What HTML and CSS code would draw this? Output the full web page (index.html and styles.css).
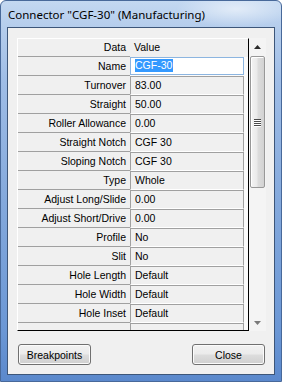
FILE: index.html
```html
<!DOCTYPE html>
<html>
<head>
<meta charset="utf-8">
<link rel="stylesheet" href="styles.css">
</head>
<body>
<div class="window">
  <div class="titlebar"><span class="title">Connector "CGF-30" (Manufacturing)</span></div>
  <div class="client">
    <div class="main">
      <div class="grid">
        <div class="row header"><div class="label">Data</div><div class="wrap"><div class="hcell">Value</div></div></div>
        <div class="row"><div class="label">Name</div><div class="wrap"><div class="cell edit"><span class="sel">CGF-30</span></div></div></div>
        <div class="row"><div class="label">Turnover</div><div class="wrap"><div class="cell">83.00</div></div></div>
        <div class="row"><div class="label">Straight</div><div class="wrap"><div class="cell">50.00</div></div></div>
        <div class="row"><div class="label">Roller Allowance</div><div class="wrap"><div class="cell">0.00</div></div></div>
        <div class="row"><div class="label">Straight Notch</div><div class="wrap"><div class="cell">CGF 30</div></div></div>
        <div class="row"><div class="label">Sloping Notch</div><div class="wrap"><div class="cell">CGF 30</div></div></div>
        <div class="row"><div class="label">Type</div><div class="wrap"><div class="cell">Whole</div></div></div>
        <div class="row"><div class="label">Adjust Long/Slide</div><div class="wrap"><div class="cell">0.00</div></div></div>
        <div class="row"><div class="label">Adjust Short/Drive</div><div class="wrap"><div class="cell">0.00</div></div></div>
        <div class="row"><div class="label">Profile</div><div class="wrap"><div class="cell">No</div></div></div>
        <div class="row"><div class="label">Slit</div><div class="wrap"><div class="cell">No</div></div></div>
        <div class="row"><div class="label">Hole Length</div><div class="wrap"><div class="cell">Default</div></div></div>
        <div class="row"><div class="label">Hole Width</div><div class="wrap"><div class="cell">Default</div></div></div>
        <div class="row"><div class="label">Hole Inset</div><div class="wrap"><div class="cell">Default</div></div></div>
        <div class="row"><div class="label"></div><div class="wrap"><div class="cell"></div></div></div>
      </div>
      <div class="scrollbar">
        <div class="sb-btn"><svg width="7" height="4" viewBox="0 0 7 4"><polygon points="0,4 7,4 3.5,0" fill="#2b2b2b"/></svg></div>
        <div class="sb-track">
          <div class="thumb"><div class="grip"><i></i><i></i><i></i><i></i></div></div>
        </div>
        <div class="sb-btn"><svg width="7" height="4" viewBox="0 0 7 4"><polygon points="0,0 7,0 3.5,4" fill="#7a7a7a"/></svg></div>
      </div>
    </div>
    <div class="buttons">
      <button class="btn">Breakpoints</button>
      <button class="btn">Close</button>
    </div>
  </div>
</div>
</body>
</html>
```
FILE: styles.css
```css
html, body {
  margin: 0;
  padding: 0;
  background: #ffffff;
}
.window {
  width: 282px;
  height: 382px;
  box-sizing: border-box;
  border: 1px solid #48699a;
  border-radius: 6px 6px 0 0;
  padding: 0 6px 6px 6px;
  display: flex;
  flex-direction: column;
  background:
    radial-gradient(ellipse 60px 18px at 235px 8px, rgba(255,255,255,0.55), rgba(255,255,255,0) 100%),
    linear-gradient(180deg, #c3d8f1 0px, #b5cdec 26px, #9fbde6 80px, #84a9dc 200px, #6b97d5 330px, #5a88cc 382px);
}
.titlebar {
  height: 26px;
  display: flex;
  align-items: center;
  padding-left: 1px;
}
.title {
  font-family: "Noto Sans", "Open Sans", sans-serif;
  font-size: 11.5px;
  color: #000;
  padding-top: 1px;
}
.client {
  width: 268px;
  height: 348px;
  box-sizing: border-box;
  border: 1px solid #3d5679;
  background: #f0f0f0;
  padding: 10px 8px 9px 9px;
  display: flex;
  flex-direction: column;
  font-family: "Liberation Sans", Arial, sans-serif;
  font-size: 10.5px;
  color: #000;
}
.main {
  display: flex;
  height: 293px;
}
.grid {
  width: 232px;
  height: 293px;
  box-sizing: border-box;
  border-top: 1px solid #ffffff;
  border-left: 1px solid #ffffff;
  border-right: 1px solid #000000;
  border-bottom: 1px solid #000000;
  background: #f0f0f0;
  overflow: hidden;
}
.row {
  display: flex;
  height: 19px;
  flex: none;
}
.row.header {
  height: 18px;
}
.label {
  width: 112px;
  box-sizing: border-box;
  border-bottom: 1px solid #a0a0a0;
  text-align: right;
  padding-right: 4px;
  line-height: 18px;
  white-space: nowrap;
}
.header .label {
  line-height: 17px;
}
.wrap {
  width: 118px;
  background: #fbfbfb;
}
.header .wrap {
  background: #f0f0f0;
}
.hcell {
  padding-left: 4px;
  line-height: 17px;
}
.cell {
  width: 114px;
  height: 19px;
  box-sizing: border-box;
  border: 1px solid #a0a0a0;
  border-bottom-color: #ffffff;
  background: #f0f0f0;
  padding-left: 4px;
  line-height: 17px;
  white-space: nowrap;
}
.cell.edit {
  background: #ffffff;
  border: 1px solid #8cb5e0;
  height: 18px;
  line-height: 15px;
}
.sel {
  background: #3399ff;
  color: #ffffff;
  display: inline-block;
  line-height: 13px;
  padding: 0 1px 0 0;
}
.scrollbar {
  width: 17px;
  height: 293px;
  display: flex;
  flex-direction: column;
  background: #f4f4f4;
}
.sb-btn {
  height: 17px;
  display: flex;
  align-items: center;
  justify-content: center;
  flex: none;
}
.sb-btn svg {
  display: block;
}
.sb-track {
  flex: 1;
  padding: 1px 1px 0 1px;
}
.thumb {
  height: 132px;
  box-sizing: border-box;
  border: 1px solid #989898;
  border-radius: 2px;
  background: linear-gradient(90deg, #f4f4f4 0%, #eaeaea 45%, #dcdcdc 55%, #d2d2d2 100%);
  box-shadow: inset 1px 1px 0 #ffffff;
  display: flex;
  align-items: center;
  justify-content: center;
}
.grip {
  display: flex;
  flex-direction: column;
  gap: 1px;
}
.grip i {
  display: block;
  width: 7px;
  height: 1px;
  background: #4a4a4a;
  box-shadow: 0 1px 0 #ffffff;
}
.buttons {
  margin-top: 13px;
  display: flex;
  justify-content: space-between;
  padding: 0 1px;
}
.btn {
  width: 73px;
  height: 21px;
  box-sizing: border-box;
  border: 1px solid #707070;
  border-radius: 3px;
  background: linear-gradient(180deg, #f2f2f2 0%, #ebebeb 48%, #dddddd 52%, #cfcfcf 100%);
  box-shadow: inset 0 0 0 1px #fbfbfb;
  font-family: "Liberation Sans", Arial, sans-serif;
  font-size: 10.5px;
  color: #000;
  padding: 0;
  margin: 0;
}
```
